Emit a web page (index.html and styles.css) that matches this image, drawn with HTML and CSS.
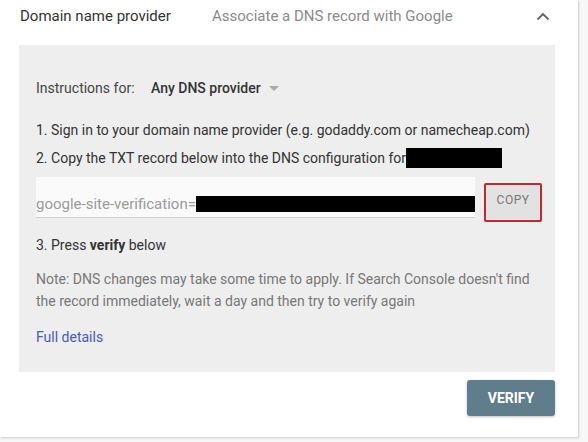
FILE: index.html
```html
<!DOCTYPE html>
<html>
<head>
<meta charset="utf-8">
<link rel="stylesheet" href="styles.css">
</head>
<body>
<div class="card">
  <div class="header">
    <span class="title">Domain name provider</span>
    <span class="subtitle">Associate a DNS record with Google</span>
    <svg class="chevron" width="14" height="9" viewBox="0 0 14 9"><path d="M1.5 7.5 L7 2 L12.5 7.5" fill="none" stroke="#5f6368" stroke-width="1.8"/></svg>
  </div>
  <div class="panel">
    <div class="instr">
      <span class="instr-label">Instructions for:</span>
      <span class="instr-value">Any DNS provider</span>
      <span class="tri"></span>
    </div>
    <p class="step step1">1. Sign in to your domain name provider (e.g. godaddy.com or namecheap.com)</p>
    <p class="step step2">2. Copy the TXT record below into the DNS configuration for<span class="redact redact-domain"></span></p>
    <div class="record-row">
      <div class="record">
        <span class="record-text">google-site-verification=</span><span class="redact redact-record"></span>
      </div>
      <div class="copy-outline"><div class="copy-btn">COPY</div></div>
    </div>
    <p class="step step3">3. Press <b>verify</b> below</p>
    <p class="note">Note: DNS changes may take some time to apply. If Search Console doesn't find the record immediately, wait a day and then try to verify again</p>
    <a class="details">Full details</a>
  </div>
  <div class="actions">
    <div class="verify">VERIFY</div>
  </div>
</div>
</body>
</html>
```
FILE: styles.css
```css
html, body {
  margin: 0;
  padding: 0;
}
body {
  background: #f7f7f7;
  font-family: Roboto, "Liberation Sans", sans-serif;
  width: 588px;
  height: 442px;
  overflow: hidden;
}
.card {
  width: 578px;
  height: 437px;
  background: #fff;
  box-shadow: 1px 1px 2px rgba(0,0,0,0.18);
  box-sizing: border-box;
  padding: 0 23px 0 19px;
}
.header {
  height: 45px;
  display: flex;
  align-items: flex-start;
  padding-top: 6px;
  box-sizing: border-box;
}
.title {
  font-size: 15px;
  color: #333;
  margin-left: 1px;
  width: 192px;
  line-height: 20px;
}
.subtitle {
  font-size: 15px;
  color: #8a8a8a;
  line-height: 20px;
  flex: 1;
}
.chevron {
  margin-top: 6px;
  margin-right: 5px;
}
.panel {
  background: #eeeeee;
  height: 327px;
  box-sizing: border-box;
  padding: 0 0 0 17px;
}
.instr {
  display: flex;
  align-items: center;
  padding-top: 33px;
  height: 20px;
  font-size: 14px;
}
.instr-label {
  color: #444;
  width: 115px;
}
.instr-value {
  color: #333;
  font-weight: 500;
}
.tri {
  width: 0;
  height: 0;
  border-left: 5px solid transparent;
  border-right: 5px solid transparent;
  border-top: 5px solid #aaa;
  margin-left: 8px;
  margin-top: 1px;
}
.step {
  margin: 0;
  font-size: 14px;
  color: #333;
  line-height: 20px;
}
.step1 { margin-top: 22px; }
.step2 { margin-top: 8px; display: flex; align-items: center; }
.redact {
  display: inline-block;
  background: #000;
}
.redact-domain {
  width: 96px;
  height: 20px;
  margin-left: 0;
}
.record-row {
  display: flex;
  margin-top: 9px;
}
.record {
  width: 439px;
  height: 41px;
  background: #fafafa;
  border-bottom: 1px solid #cfcfcf;
  box-sizing: border-box;
  display: flex;
  align-items: flex-end;
  padding-bottom: 3px;
  font-size: 15px;
  color: #9a9a9a;
}
.record-text { line-height: 20px; }
.redact-record {
  width: 279px;
  height: 16px;
  margin-bottom: 2px;
}
.copy-outline {
  margin-left: 9px;
  margin-top: 6px;
  width: 58px;
  height: 39px;
  border: 2px solid #c8252b;
  border-radius: 2px;
  box-sizing: border-box;
  padding: 1px;
}
.copy-btn {
  height: 100%;
  background: #e2e2e2;
  color: #777;
  font-size: 12px;
  letter-spacing: 0.5px;
  display: flex;
  align-items: flex-start;
  justify-content: center;
  padding-top: 7px;
  box-sizing: border-box;
}
.step3 { margin-top: 13px; }
.note {
  margin: 13px 0 0;
  font-size: 14px;
  color: #777;
  line-height: 22px;
  width: 505px;
}
.details {
  display: block;
  margin-top: 15px;
  font-size: 14px;
  color: #4759be;
  line-height: 20px;
}
.actions {
  display: flex;
  justify-content: flex-end;
  padding-top: 8px;
}
.verify {
  width: 88px;
  height: 36px;
  background: #607d8b;
  color: #fff;
  font-weight: 700;
  font-size: 14px;
  border-radius: 3px;
  display: flex;
  align-items: center;
  justify-content: center;
  box-shadow: 0 1px 3px rgba(0,0,0,0.25);
}
```
